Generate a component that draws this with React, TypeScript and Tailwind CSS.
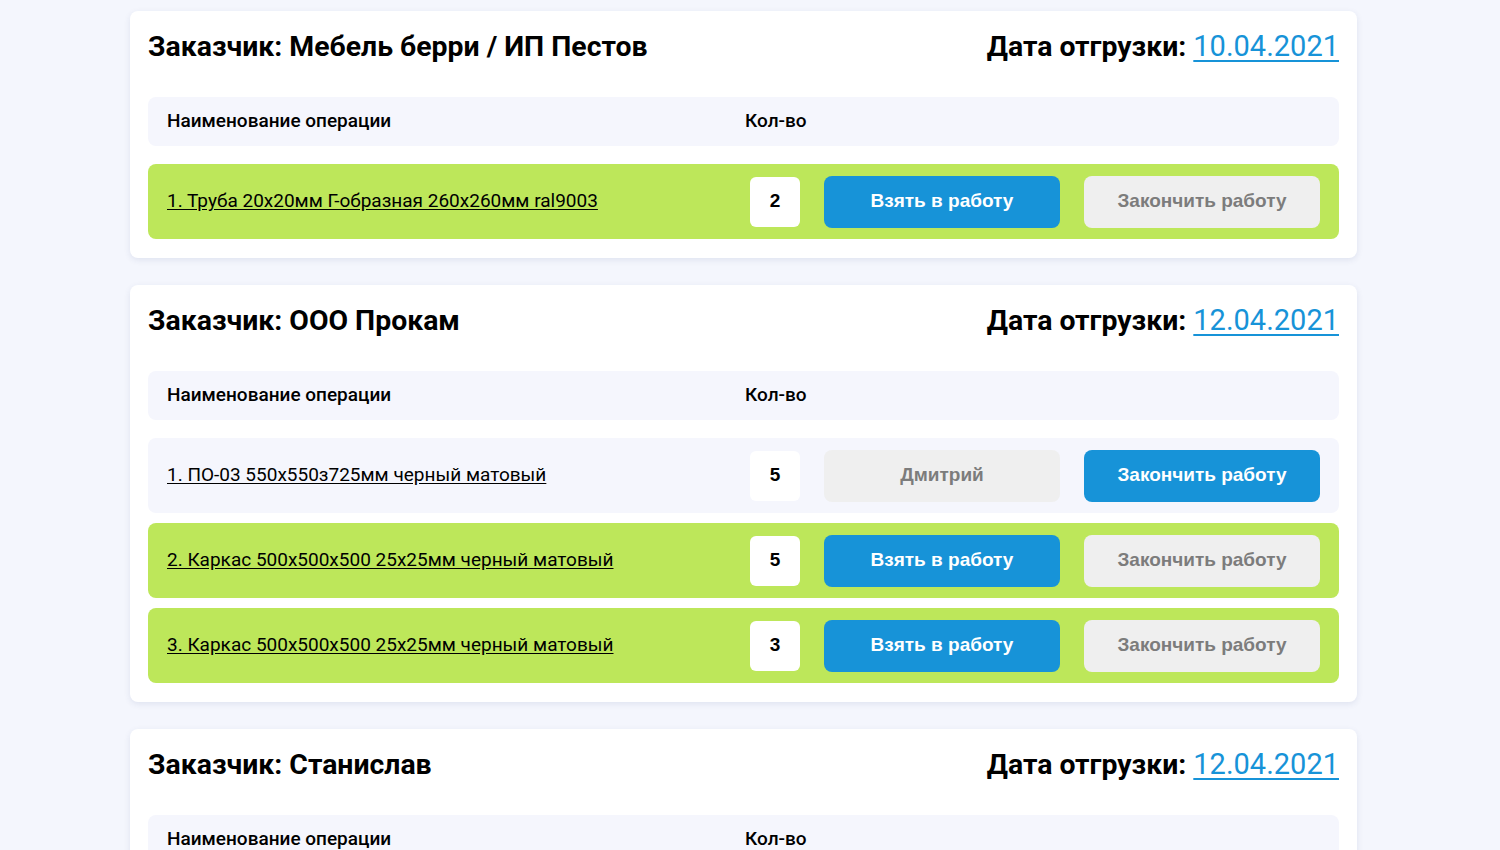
import React from "react";

type Row = {
  name: string;
  qty: number;
  state: "free" | "taken";
  worker?: string;
};

type Order = {
  customer: string;
  date: string;
  rows: Row[];
};

const orders: Order[] = [
  {
    customer: "Мебель берри / ИП Пестов",
    date: "10.04.2021",
    rows: [{ name: "1. Труба 20х20мм Г-образная 260х260мм ral9003", qty: 2, state: "free" }],
  },
  {
    customer: "ООО Прокам",
    date: "12.04.2021",
    rows: [
      { name: "1. ПО-03 550х550з725мм черный матовый", qty: 5, state: "taken", worker: "Дмитрий" },
      { name: "2. Каркас 500х500х500 25х25мм черный матовый", qty: 5, state: "free" },
      { name: "3. Каркас 500х500х500 25х25мм черный матовый", qty: 3, state: "free" },
    ],
  },
  {
    customer: "Станислав",
    date: "12.04.2021",
    rows: [{ name: "1. Труба 20х20мм", qty: 1, state: "free" }],
  },
];

const btnBase =
  "w-[236px] h-[52px] rounded-lg flex items-center justify-center text-[19px] font-bold font-['Liberation_Sans',Arial,sans-serif]";

function OperationRow({ row }: { row: Row }) {
  const taken = row.state === "taken";
  return (
    <div
      className={`flex items-center h-[75px] px-[19px] rounded-lg ${
        taken ? "bg-[#f5f6fd]" : "bg-[#bde75a]"
      }`}
    >
      <a href="#" className="flex-1 text-[19px] text-black underline underline-offset-2">
        {row.name}
      </a>
      <div className="w-[50px] h-[50px] bg-white rounded-md flex items-center justify-center text-[19px] font-bold font-['Liberation_Sans',Arial,sans-serif] text-black">
        {row.qty}
      </div>
      <div className="flex gap-6 ml-6">
        {taken ? (
          <>
            <div className={`${btnBase} bg-[#efefef] text-[#7c7c7c]`}>{row.worker}</div>
            <button className={`${btnBase} bg-[#1793d8] text-white`}>Закончить работу</button>
          </>
        ) : (
          <>
            <button className={`${btnBase} bg-[#1793d8] text-white`}>Взять в работу</button>
            <button className={`${btnBase} bg-[#efefef] text-[#7c7c7c]`}>Закончить работу</button>
          </>
        )}
      </div>
    </div>
  );
}

function OrderCard({ order }: { order: Order }) {
  return (
    <div className="w-[1227px] bg-white rounded-lg shadow-[0_2px_6px_rgba(40,60,120,0.10)] px-[18px] pt-[18px] pb-[19px]">
      <div className="flex justify-between items-center h-[36px] mb-8 text-[28.4px] font-bold text-black">
        <h2>Заказчик: {order.customer}</h2>
        <div>
          Дата отгрузки:{" "}
          <a href="#" className="font-normal text-[29px] text-[#1793d8] underline underline-offset-4">
            {order.date}
          </a>
        </div>
      </div>

      <div className="flex items-center h-[49px] px-[19px] rounded-lg bg-[#f5f6fd] text-[19px] font-medium text-black mb-[18px]">
        <span className="flex-1">Наименование операции</span>
        <span className="w-[575px]">Кол-во</span>
      </div>

      <div className="flex flex-col gap-[10px]">
        {order.rows.map((r, i) => (
          <OperationRow key={i} row={r} />
        ))}
      </div>
    </div>
  );
}

export default function App() {
  return (
    <div className="min-h-screen bg-[#f4f6fd] pl-[130px] pt-[11px] pb-10 font-['Roboto',sans-serif]">
      <div className="flex flex-col gap-[27px]">
        {orders.map((o, i) => (
          <OrderCard key={i} order={o} />
        ))}
      </div>
    </div>
  );
}
